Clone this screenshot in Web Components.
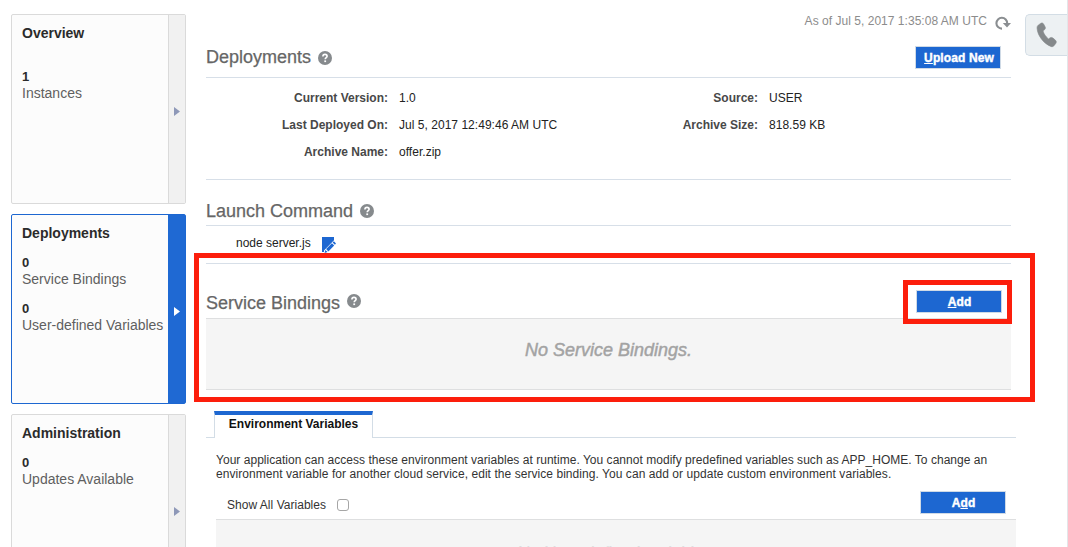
<!DOCTYPE html>
<html lang="en">
<head>
<meta charset="utf-8">
<title>Deployments</title>
<style>
html,body{margin:0;height:547px;overflow:hidden;background:#fff}
body{font-family:"Liberation Sans",Arial,sans-serif;font-size:12px;letter-spacing:.03px;color:#333}
</style>
</head>
<body>
<app-console></app-console>
<script>
const define = (name, html, setup) => customElements.define(name, class extends HTMLElement {
  constructor() {
    super();
    this.attachShadow({ mode: 'open' }).innerHTML = html;
  }
  connectedCallback() { if (setup) setup(this, this.shadowRoot); }
});

define('nav-metric', `
<style>
:host{display:block;font-size:14px;line-height:16px;color:#5f5f5f;margin-bottom:14px;white-space:nowrap}
b{display:block;color:#2b2b2b;font-size:13px;line-height:16px}
</style><b></b><slot></slot>`, (el, root) => {
  root.querySelector('b').textContent = el.getAttribute('count');
});

define('nav-card', `
<style>
:host{display:flex;box-sizing:border-box;height:190px;border:1px solid #dadada;border-radius:2px;background:#fcfcfc;flex:none}
.body{flex:1;padding:10px 0 0 10px;min-width:0}
h2{margin:0 0 13px;font-size:14px;line-height:17px;color:#2b2b2b;letter-spacing:0}
:host([roomy]) h2{margin-bottom:27px}
.strip{width:17px;border-left:1px solid #dadada;background:#f1f1f1;display:flex;align-items:center;padding-top:4px;box-sizing:border-box}
svg{display:block;margin-left:5px;fill:#8e98b8}
:host([selected]){border-color:#1d67d1}
:host([selected]) .strip{background:#1f69d3;border-color:#1f69d3}
:host([selected]) svg{fill:#fff}
</style>
<div class="body"><h2></h2><slot></slot></div>
<div class="strip"><svg width="6" height="9"><path d="M0 0L6 4.5L0 9Z"/></svg></div>`, (el, root) => {
  root.querySelector('h2').textContent = el.getAttribute('heading');
});

define('help-icon', `
<style>
:host{display:block;width:14px;height:14px}
svg{display:block}
</style>
<svg width="14" height="14" viewBox="0 0 14 14"><circle cx="7" cy="7" r="7" fill="#868a8d"/><path d="M4.9 5.5C4.9 4.1 5.8 3.4 7 3.4S9.1 4.1 9.1 5.2C9.1 6.6 7.2 6.6 7.2 8.3" fill="none" stroke="#fff" stroke-width="1.6"/><rect x="6.3" y="9.4" width="1.8" height="1.7" fill="#fff"/></svg>`);

define('action-button', `
<style>
:host{display:block}
button{display:block;box-sizing:border-box;width:86px;height:23px;padding:0 0 0 1px;border:1px solid #cfdae6;background:#1d67d1;color:#fff;font:bold 12px/22px "Liberation Sans",Arial,sans-serif;letter-spacing:.12px;-webkit-text-stroke:.4px #fff;text-align:center;white-space:nowrap}
</style><button><slot></slot></button>`);

define('section-heading', `
<style>
:host{display:flex;align-items:center;box-sizing:border-box;border-bottom:1px solid #d7dfe8}
h1{margin:0 7px 0 0;font-size:18px;font-weight:normal;letter-spacing:0;line-height:22px;color:#666;-webkit-text-stroke:.25px #666;white-space:nowrap}
help-icon{margin-top:var(--icon-top,1px)}
.action{margin:0 var(--action-right,10px) var(--action-bottom,0) auto}
</style><h1></h1><help-icon></help-icon><div class="action"><slot></slot></div>`, (el, root) => {
  root.querySelector('h1').textContent = el.getAttribute('heading');
});

define('data-field', `
<style>
:host{display:flex;line-height:27px;height:27px;white-space:nowrap;color:#222}
b{box-sizing:border-box;width:var(--label-width,182px);text-align:right;margin-right:11px;letter-spacing:0;color:#484848}
</style><b></b><slot></slot>`, (el, root) => {
  root.querySelector('b').textContent = el.getAttribute('label') + ':';
});

define('empty-panel', `
<style>
:host{display:block;box-sizing:border-box;background:#f5f5f5;text-align:center;font-size:18px;font-style:italic;color:#a3a3a3;line-height:22px;-webkit-text-stroke:.45px #a3a3a3}
</style><slot></slot>`);

define('refresh-status', `
<style>
:host{display:flex;justify-content:flex-end;align-items:center;color:#8c8c8c;line-height:16px;white-space:nowrap}
svg{display:block;margin:4px 0 0 8px}
</style><slot></slot>
<svg width="16" height="14" viewBox="0 0 16 14"><path d="M7 12.6A5.4 5.4 0 1 1 12.2 7.4" fill="none" stroke="#8a8e91" stroke-width="2.1"/><path d="M7.8 7H16L12 11.4Z" fill="#8a8e91"/></svg>`);

define('phone-tab', `
<style>
:host{display:flex;align-items:center;justify-content:center;box-sizing:border-box;width:42px;height:42px;border:1px solid #d3dde5;border-right:0;border-radius:5px 0 0 5px;background:#edf1f3}
svg{display:block}
</style>
<svg width="22" height="26" viewBox="0 0 22 26"><path d="M2.2 3.2L4.6 1.4C5.8.7 7 .9 7.6 2L9.2 5C9.7 6.1 9.3 7.2 8.4 7.8L7 8.8C7.7 11.9 9.8 14.6 12.4 16.9L14.2 15.8C15.1 15.2 16.2 15.4 17 16.1L19.5 18.3C20.5 19.2 20.5 20.4 19.8 21.4L18.2 23.4C17.4 24.6 16.1 25 14.8 24.4C7.6 21.4 1.6 13.7 1.1 6.4C1 5 1.2 4 2.2 3.2Z" fill="#85898b" stroke="#85898b" stroke-width=".6"/></svg>`);

define('edit-icon', `
<style>:host{display:block}svg{display:block}</style>
<svg width="14" height="16" viewBox="0 0 14 16"><path d="M0 0H12V3.2L2 13.6V15H0Z" fill="#1d67d1"/><path d="M2.6 15.9L3.3 12.9L5.6 15.1ZM4.1 12.1L9.9 6.2L12.2 8.4L6.4 14.4ZM10.6 5.5L11.9 4.2L14 6.5L12.9 7.7Z" fill="#1d67d1"/></svg>`);

define('tab-bar', `
<style>
:host{display:flex;height:27px}
.lead{width:8px}.rest{flex:1}
.lead,.rest{border-bottom:1px solid #d3dde6}
.tab{box-sizing:border-box;width:159px;border:1px solid #d3dde6;border-top:4px solid #1d67d1;border-bottom:0;text-align:center;font-weight:bold;letter-spacing:0;line-height:18px;color:#111;white-space:nowrap}
</style><div class="lead"></div><div class="tab"><slot></slot></div><div class="rest"></div>`);

define('callout-frame', `
<style>:host{display:block;position:absolute;box-sizing:border-box;border:5px solid #fc1e0c;pointer-events:none}</style>`);

define('app-console', `
<style>
:host{display:flex;position:relative;box-sizing:border-box;width:1068px;height:547px;overflow:hidden;padding-left:11px;border-right:1px solid #e3e6e9}
nav{display:flex;flex-direction:column;gap:10px;width:175px;margin-right:20px;padding-top:14px;flex:none;letter-spacing:0}
main{width:810px;flex:none}
.col{width:805px}
refresh-status{height:20px;padding-top:11px}
.h1{height:47px;padding-top:6px}
.fields{display:grid;grid-template-columns:407px 1fr;height:101px;box-sizing:content-box;border-bottom:1px solid #d7dfe8}
.fields>div{padding-top:7px}
.second{--label-width:145px}
.h2{height:46px;padding-top:16px}
.cmd{display:flex;height:37px;padding-left:30px;border-bottom:1px solid #d7dfe8;line-height:34px;letter-spacing:0;color:#222}
edit-icon{margin:11px 0 0 11px}
.h3{height:55px;padding-top:24px;border-color:#dedfe0;--icon-top:-5px;--action-right:9px;--action-bottom:4px}
.p1{height:71px;padding-top:20px;border-bottom:1px solid #dedfe0;letter-spacing:0}
tab-bar{margin-top:21px}
p{margin:15px 0 0 10px;line-height:14px;white-space:nowrap}
p span{letter-spacing:.055px}
.show{display:flex;align-items:center;margin-left:10px;padding:9px 10px 0 11px;height:29px}
.show input{appearance:none;box-sizing:border-box;width:12px;height:12px;border:1px solid #a6a6a6;border-radius:3px;margin:0 0 0 11px;background:#fff}
.show action-button{margin:-4px 0 0 auto}
.p2{margin-left:10px;height:80px;border-top:1px solid #dedfe0;padding-top:23px;font-size:17px;letter-spacing:-.1px}
phone-tab{margin:14px 0 0 auto;flex:none}
.outer{left:194px;top:253px;width:841px;height:149px}
.inner{left:903px;top:280px;width:109px;height:44px}
</style>
<nav>
<nav-card heading="Overview" roomy><nav-metric count="1">Instances</nav-metric></nav-card>
<nav-card heading="Deployments" selected><nav-metric count="0">Service Bindings</nav-metric><nav-metric count="0">User-defined Variables</nav-metric></nav-card>
<nav-card heading="Administration"><nav-metric count="0">Updates Available</nav-metric></nav-card>
</nav>
<main>
<div class="col">
<refresh-status>As of Jul 5, 2017 1:35:08 AM UTC</refresh-status>
<section-heading class="h1" heading="Deployments"><action-button>&#8202;<u>U</u>pload New</action-button></section-heading>
<div class="fields">
<div><data-field label="Current Version">1.0</data-field><data-field label="Last Deployed On">Jul 5, 2017 12:49:46 AM UTC</data-field><data-field label="Archive Name">offer.zip</data-field></div>
<div class="second"><data-field label="Source">USER</data-field><data-field label="Archive Size">818.59 KB</data-field></div>
</div>
<section-heading class="h2" heading="Launch Command"></section-heading>
<div class="cmd">node server.js<edit-icon></edit-icon></div>
<section-heading class="h3" heading="Service Bindings"><action-button><u>A</u>dd</action-button></section-heading>
<empty-panel class="p1">No Service Bindings.</empty-panel>
</div>
<tab-bar>Environment Variables</tab-bar>
<p>Your application can access these environment variables at runtime. You cannot modify predefined variables such as APP_HOME. To change an<br><span>environment variable for another cloud service, edit the service binding. You can add or update custom environment variables.</span></p>
<div class="show"><span>Show All Variables</span><input type="checkbox" aria-label="Show All Variables"><action-button>A<u>d</u>d</action-button></div>
<empty-panel class="p2">No User-defined variables.</empty-panel>
</main>
<phone-tab></phone-tab>
<callout-frame class="outer"></callout-frame>
<callout-frame class="inner"></callout-frame>`);
</script>
</body>
</html>
